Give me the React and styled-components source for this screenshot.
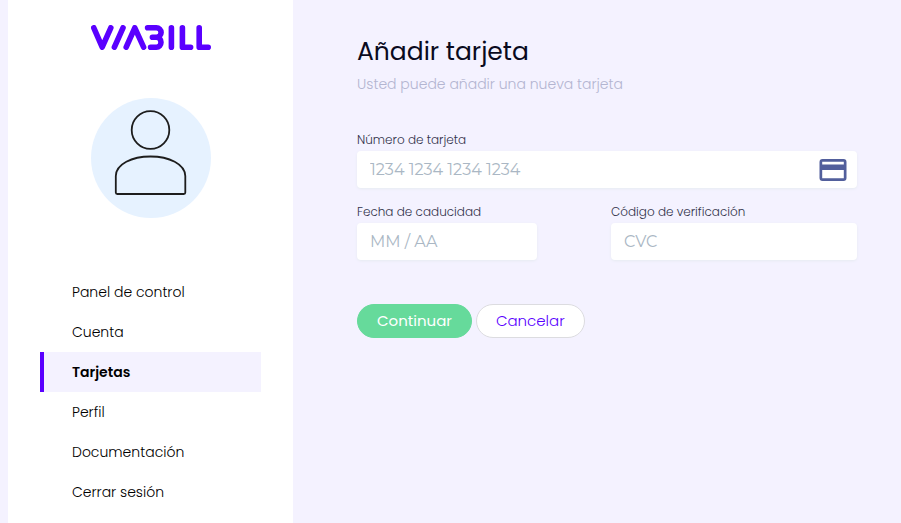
import React from "react";
import styled, { createGlobalStyle } from "styled-components";

const COLORS = {
  purple: "#5a00ff",
  background: "#f4f2ff",
  text: "#0a0a1e",
  label: "#32324b",
  muted: "#b3b5d1",
  placeholder: "#aab7c4",
  green: "#66da9b",
  card: "#525f9c",
};

const MENU = [
  { title: "Panel de control" },
  { title: "Cuenta" },
  { title: "Tarjetas", active: true },
  { title: "Perfil" },
  { title: "Documentación" },
  { title: "Cerrar sesión" },
];

const GlobalStyle = createGlobalStyle`
  * {
    box-sizing: border-box;
  }

  body {
    margin: 0;
    background-color: ${COLORS.background};
    color: ${COLORS.text};
    font-family: "Poppins", "Inter", sans-serif;
    font-weight: 300;
  }
`;

const StyledPage = styled.div`
  display: grid;
  grid-template-columns: 285px minmax(0, 1fr);
  min-height: 100vh;
  padding-left: 8px;
`;

const StyledSidebar = styled.aside`
  display: flex;
  flex-flow: column nowrap;
  align-items: center;
  padding: 25px 32px 11px;
  background-color: #ffffff;
`;

const StyledLogoLink = styled.a`
  display: block;
  height: 25px;
`;

const StyledAvatar = styled.div`
  display: flex;
  align-items: center;
  justify-content: center;
  height: 120px;
  width: 120px;
  margin: 48px 0 54px;
  border-radius: 50%;
  background-color: #e6f2ff;
`;

const StyledNav = styled.nav`
  display: flex;
  flex-flow: column nowrap;
  align-self: stretch;
`;

const StyledNavLink = styled.a`
  display: flex;
  align-items: center;
  height: 40px;
  padding-left: 28px;
  border-left: 4px solid ${({ $active }) => ($active ? COLORS.purple : "transparent")};
  background-color: ${({ $active }) => ($active ? COLORS.background : "transparent")};
  color: #000000;
  font-size: 14px;
  font-weight: ${({ $active }) => ($active ? 600 : 300)};
  text-decoration: none;
`;

const StyledMain = styled.main`
  padding: 34px 44px 32px 64px;
`;

const StyledTitle = styled.h1`
  margin: 0;
  font-size: 25px;
  font-weight: 400;
  line-height: 36px;
`;

const StyledSubtitle = styled.p`
  margin: 0 0 30px;
  color: ${COLORS.muted};
  font-size: 14px;
  line-height: 28px;
`;

const StyledForm = styled.form`
  display: flex;
  flex-flow: column nowrap;
  gap: 12px;
  max-width: 500px;
`;

const StyledRow = styled.div`
  display: flex;
  justify-content: space-between;
`;

const StyledField = styled.div`
  display: flex;
  flex-flow: column nowrap;
  width: ${({ $width }) => $width || "100%"};
`;

const StyledLabel = styled.label`
  color: ${COLORS.label};
  font-size: 12px;
  line-height: 23px;
`;

const StyledInputBox = styled.div`
  display: flex;
  align-items: center;
  height: 37px;
  padding: 0 10px 0 13px;
  border-radius: 4px;
  background-color: #ffffff;
  box-shadow: 0 1px 3px 0 #e6ebf1;
`;

const StyledInput = styled.input`
  flex: 1;
  min-width: 0;
  padding: 0;
  border: none;
  outline: none;
  background: transparent;
  color: ${COLORS.text};
  font-family: "Montserrat", "Inter", sans-serif;
  font-size: 16px;

  &::placeholder {
    color: ${COLORS.placeholder};
  }
`;

const StyledActions = styled.div`
  display: flex;
  gap: 4px;
  margin-top: 32px;
`;

const StyledButton = styled.button`
  height: 34px;
  padding: 0 19px 2px;
  border: 1px solid ${({ $primary }) => ($primary ? COLORS.green : "#dcdce0")};
  border-radius: 17px;
  background-color: ${({ $primary }) => ($primary ? COLORS.green : "#ffffff")};
  color: ${({ $primary }) => ($primary ? "#ffffff" : COLORS.purple)};
  font-family: inherit;
  font-size: 15px;
  font-weight: ${({ $primary }) => ($primary ? 400 : 300)};
  cursor: pointer;
`;

function Logo() {
  return (
    <svg width="120" height="25" viewBox="0 0 120 25" fill="none" stroke={COLORS.purple} strokeWidth="5.6" strokeLinecap="round" strokeLinejoin="round">
      <path d="M2.800 2.800 11.200 22.200 19.800 2.800M23.400 22.200 32 2.800M35.200 22.200 43.800 2.800 52.600 22.200" />
      <path d="M56.600 2.800H65.400A4.600 4.600 0 0 1 65.400 12.200H61.400M65.400 12.200A4.600 5 0 0 1 65.400 22.200H59.600" />
      <path d="M80.400 2.800V22.200M91.400 2.800V22.200H99.600M108.200 2.800V22.200H117.200" />
    </svg>
  );
}

function UserIcon() {
  return (
    <svg width="120" height="120" viewBox="0 0 120 120" fill="none" stroke="#1d1d1d" strokeWidth="1.8">
      <circle cx="59.500" cy="32" r="18.800" />
      <path d="M24.800 94.500V78C25 66 41 58.500 59.500 58.500S94 66 94.300 78V94.500Q94.300 96 92.800 96H26.300Q24.800 96 24.800 94.500Z" />
    </svg>
  );
}

function CardIcon() {
  return (
    <svg width="28" height="22" viewBox="0 0 28 22" fill={COLORS.card}>
      <path fillRule="evenodd" d="M3.500 0H24.500A3 3 0 0 1 27.500 3V19A3 3 0 0 1 24.500 22H3.500A3 3 0 0 1 .500 19V3A3 3 0 0 1 3.500 0ZM3.200 2.700V5.500H24.800V2.700ZM3.200 11V19.300H24.800V11Z" />
    </svg>
  );
}

function Field({ id, label, placeholder, width, icon }) {
  return (
    <StyledField $width={width}>
      <StyledLabel htmlFor={id}>{label}</StyledLabel>
      <StyledInputBox>
        <StyledInput id={id} type="text" inputMode="numeric" placeholder={placeholder} />
        {icon}
      </StyledInputBox>
    </StyledField>
  );
}

function App() {
  return (
    <>
      <GlobalStyle />
      <StyledPage>
        <StyledSidebar>
          <StyledLogoLink href="#" aria-label="ViaBill">
            <Logo />
          </StyledLogoLink>
          <StyledAvatar>
            <UserIcon />
          </StyledAvatar>
          <StyledNav>
            {MENU.map(({ title, active }) => (
              <StyledNavLink key={title} href="#" $active={active} aria-current={active ? "page" : undefined}>
                {title}
              </StyledNavLink>
            ))}
          </StyledNav>
        </StyledSidebar>
        <StyledMain>
          <StyledTitle>Añadir tarjeta</StyledTitle>
          <StyledSubtitle>Usted puede añadir una nueva tarjeta</StyledSubtitle>
          <StyledForm>
            <Field id="number" label="Número de tarjeta" placeholder="1234 1234 1234 1234" icon={<CardIcon />} />
            <StyledRow>
              <Field id="expiry" label="Fecha de caducidad" placeholder="MM / AA" width="36%" />
              <Field id="cvc" label="Código de verificación" placeholder="CVC" width="49.2%" />
            </StyledRow>
            <StyledActions>
              <StyledButton type="submit" $primary>
                Continuar
              </StyledButton>
              <StyledButton type="button">Cancelar</StyledButton>
            </StyledActions>
          </StyledForm>
        </StyledMain>
      </StyledPage>
    </>
  );
}

export default App;
